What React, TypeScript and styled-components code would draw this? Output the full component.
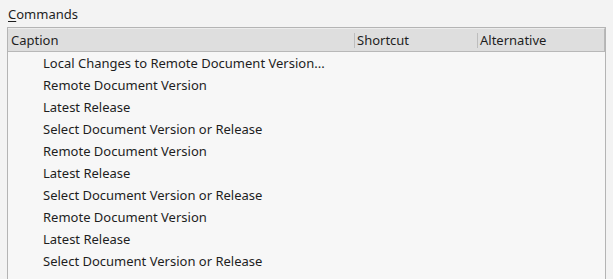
import React from 'react';
import styled, { createGlobalStyle } from 'styled-components';

const GlobalStyle = createGlobalStyle`
  html, body {
    margin: 0;
    padding: 0;
    background: #f3f3f3;
    overflow: hidden;
  }
  body {
    font-family: "Noto Sans", "Open Sans", sans-serif;
    font-size: 13px;
    color: #1e1e1e;
  }
`;

const Page = styled.div`
  width: 613px;
  height: 279px;
  padding: 4px 0 0 7px;
  box-sizing: border-box;
  overflow: hidden;
`;

const Label = styled.div`
  padding-left: 1px;
  height: 23px;
  line-height: 20px;
  u {
    text-decoration: underline;
    text-underline-offset: 2px;
  }
`;

const ListBox = styled.div`
  width: 599px;
  height: 260px;
  box-sizing: border-box;
  border: 1px solid #b4b4b4;
  border-bottom: none;
  background: #f7f7f7;
`;

const Header = styled.div`
  display: grid;
  grid-template-columns: 346px 123px 1fr;
  height: 24px;
  background: #dedede;
  border-top: 1px solid #ececec;
  border-bottom: 1px solid #b8b8b8;
  border-right: 1px solid #b8b8b8;
  box-sizing: border-box;
`;

const HeaderCell = styled.div<{ $sep?: boolean }>`
  display: flex;
  align-items: center;
  padding-left: ${(p) => (p.$sep ? '2px' : '3px')};
  border-left: ${(p) => (p.$sep ? '1px solid #bdbdbd' : 'none')};
  margin: ${(p) => (p.$sep ? '4px 0' : '0')};
  line-height: 15px;
`;

const Rows = styled.div`
  display: flex;
  flex-direction: column;
`;

const Row = styled.div`
  height: 22px;
  line-height: 22px;
  padding-left: 35px;
  white-space: nowrap;
`;

const items = [
  'Local Changes to Remote Document Version...',
  'Remote Document Version',
  'Latest Release',
  'Select Document Version or Release',
  'Remote Document Version',
  'Latest Release',
  'Select Document Version or Release',
  'Remote Document Version',
  'Latest Release',
  'Select Document Version or Release',
];

export default function App() {
  return (
    <>
      <GlobalStyle />
      <Page>
        <Label>
          <u>C</u>ommands
        </Label>
        <ListBox>
          <Header>
            <HeaderCell>Caption</HeaderCell>
            <HeaderCell $sep>Shortcut</HeaderCell>
            <HeaderCell $sep>Alternative</HeaderCell>
          </Header>
          <Rows>
            {items.map((t, i) => (
              <Row key={i}>{t}</Row>
            ))}
          </Rows>
        </ListBox>
      </Page>
    </>
  );
}
